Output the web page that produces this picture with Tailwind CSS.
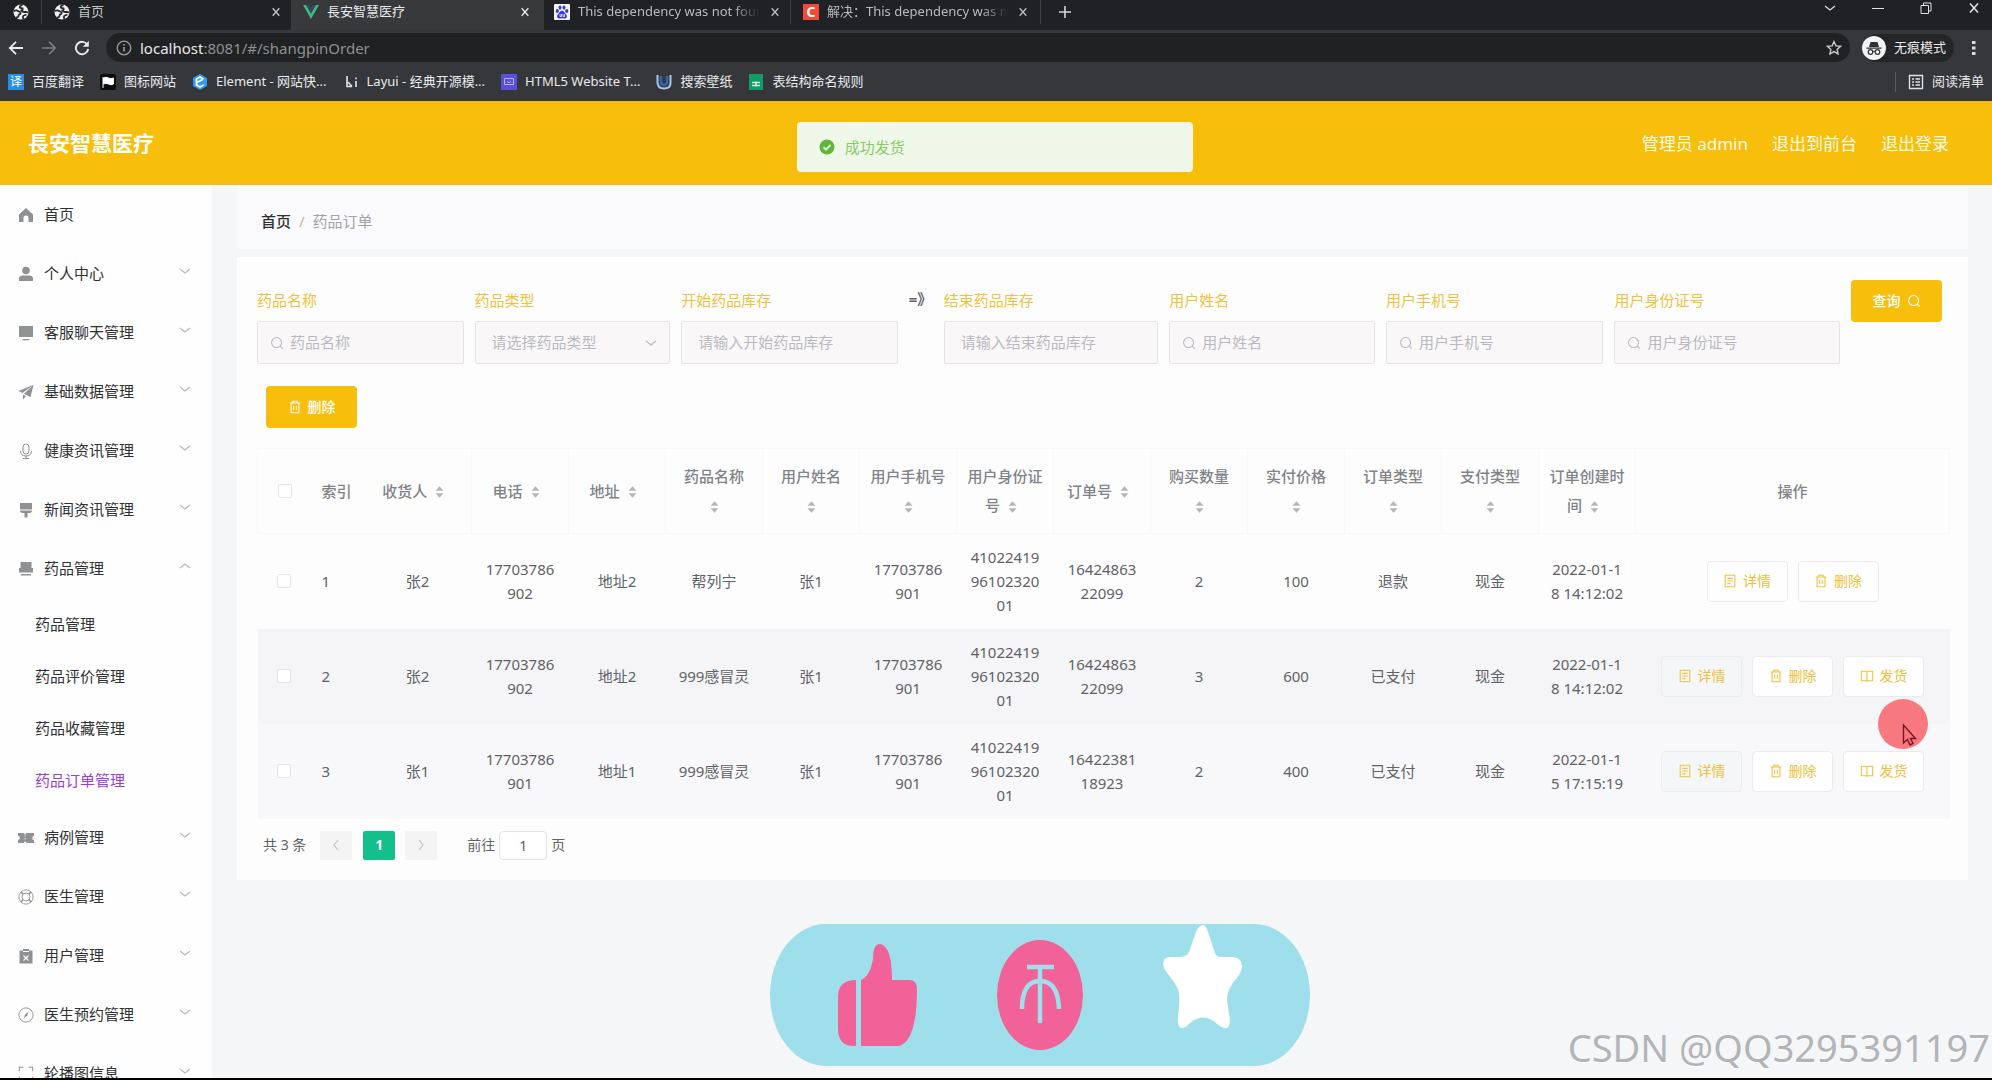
<!DOCTYPE html>
<html lang="zh-CN">
<head>
<meta charset="utf-8">
<title>長安智慧医疗</title>
<script src="https://cdn.jsdelivr.net/npm/@tailwindcss/browser@4"></script>
</head>
<body class="relative flex h-screen flex-col overflow-hidden border-b-2 border-black bg-[#f5f6f8] font-['Noto_Sans','Noto_Sans_CJK_SC',sans-serif] text-[15px] text-[#606266]">

<svg class="hidden" xmlns="http://www.w3.org/2000/svg">
  <symbol id="globe" viewBox="0 0 16 16"><circle cx="8" cy="8" r="7.500" fill="#f1f1f1"/><path d="M.8 7q3-1.500 4.700.3l2 1q.5 1.700-1.500 2.200l-1 2.500-2 .5M9.500.8Q6 1.800 7 3.800l2.500.5q.5 2-1 2.200 1.500 2 4 1.300l2.700.7M10.500 15q-1.500-2.500.5-3.500l2.500-1" fill="none" stroke="#28292b" stroke-width="1.800"/></symbol>
  <symbol id="x" viewBox="0 0 12 12"><path d="M2 1.500l8 9M10 1.500l-8 9" fill="none" stroke="currentColor" stroke-width="1.600"/></symbol>
  <symbol id="chev" viewBox="0 0 12 12"><path d="M1 4l5 4 5-4" fill="none" stroke="currentColor" stroke-width="1.200"/></symbol>
  <symbol id="search" viewBox="0 0 16 16"><circle cx="7.500" cy="7.500" r="5.700" fill="none" stroke="currentColor" stroke-width="1.200"/><path d="M11.500 11.500l3 3" stroke="currentColor" stroke-width="1.200"/></symbol>
  <symbol id="trash" viewBox="0 0 16 16"><path d="M2 3.500h12M5.500 3.500V1.500h5v2M3.500 3.500v11h9v-11M6.500 6.500v5M9.500 6.500v5" fill="none" stroke="currentColor" stroke-width="1.200"/></symbol>
  <symbol id="doc" viewBox="0 0 16 16"><path d="M2.500 1.500h11v13h-11zM5 5h6M5 8h6M5 11h3.500" fill="none" stroke="currentColor" stroke-width="1.200"/></symbol>
  <symbol id="book" viewBox="0 0 16 16"><path d="M1.500 2.500h5q1.500 0 1.500 1.500 0-1.500 1.500-1.500h5v11h-5q-1.500 0-1.500 1-0-1-1.500-1h-5zM8 4v10" fill="none" stroke="currentColor" stroke-width="1.200"/></symbol>
  <symbol id="sort" viewBox="0 0 10 16"><path d="M5 1.500l4.500 5h-9zM5 14.500l4.500-5h-9z" fill="#b4b6bb"/></symbol>
  <symbol id="home" viewBox="0 0 16 16"><path d="M8 1l7 6.500V15h-4.500v-4.500q0-2-2.500-2t-2.500 2V15H1V7.500z" fill="currentColor"/></symbol>
  <symbol id="user" viewBox="0 0 16 16"><circle cx="8" cy="4.500" r="3.800" fill="currentColor"/><path d="M1 15v-2q0-3.500 3.500-3.500h7q3.500 0 3.500 3.500v2z" fill="currentColor"/></symbol>
  <symbol id="monitor" viewBox="0 0 16 16"><path d="M1 1h14v11H1zM4.500 14h7v1.200h-7z" fill="currentColor"/></symbol>
  <symbol id="plane" viewBox="0 0 16 16"><path d="M15.500.8L.5 7l4 2zM15.500.8L6 9.800l6.500 3.400zM5 10.500v5l3-3.200z" fill="currentColor"/></symbol>
  <symbol id="mic" viewBox="0 0 16 16"><rect x="5" y="1" width="6" height="10" rx="3" fill="none" stroke="currentColor"/><path d="M2.500 8q0 5 5.500 5t5.500-5M8 13v2.500M5 15.500h6" fill="none" stroke="currentColor"/></symbol>
  <symbol id="brush" viewBox="0 0 16 16"><path d="M2 1h12v6.500H2zM2 8.500h12q0 2.500-3 2.500H9.500v4.500h-3V11H5Q2 11 2 8.500z" fill="currentColor"/></symbol>
  <symbol id="goods" viewBox="0 0 16 16"><path d="M2.500 1h11v6.500h-11zM1 7h14v4.500H1zM3 13h10v1.500H3z" fill="currentColor"/></symbol>
  <symbol id="ticket" viewBox="0 0 18 16"><path d="M0 2.500h6.500q.5 1.500 1.500 1.500t1.500-1.500H18v3q-2 .5-2 2.500t2 2.500v3H9.500Q9 12 8 12t-1.500 1.500H0v-3Q2 10 2 8T0 5.500z" fill="currentColor"/><path d="M8 5v6" stroke="#fff" stroke-dasharray="1.500 1.500"/></symbol>
  <symbol id="ring" viewBox="0 0 18 18"><circle cx="9" cy="9" r="8" fill="none" stroke="currentColor"/><circle cx="9" cy="9" r="4.500" fill="none" stroke="currentColor"/><path d="M5.800 5.800L3.300 3.300M12.200 5.800l2.500-2.500M5.800 12.200l-2.500 2.500M12.200 12.200l2.500 2.500" stroke="currentColor" stroke-width="1.500"/></symbol>
  <symbol id="claim" viewBox="0 0 16 16"><path d="M1.500 2.500H5V1h6v1.500h3.500v13h-13z" fill="currentColor"/><path d="M5 3.500h6M5.500 7.500l5 5M10.500 7.500l-5 5" stroke="#fff" stroke-width="1.100"/></symbol>
  <symbol id="compass" viewBox="0 0 18 18"><circle cx="9" cy="9" r="8" fill="none" stroke="currentColor"/><path d="M12 5L8 8.500 6.500 13l4-3.800z" fill="currentColor"/></symbol>
  <symbol id="full" viewBox="0 0 18 18"><path d="M1.500 6V1.500H6M12 1.500h4.500V6M16.500 12v4.500H12M6 16.500H1.500V12" fill="none" stroke="currentColor" stroke-width="1.200"/></symbol>
</svg>

<div class="flex-none bg-[#36373a] text-[13px] text-[#e8eaed]">
  <div class="flex h-[30px] items-start bg-[#202124]">
    <div class="flex h-6 w-[42px] items-center justify-center border-r border-[#3e3f42]"><svg class="size-4"><use href="#globe"/></svg></div>
    <div class="flex h-6 w-[249px] items-center gap-2 pr-2 pl-3 text-[#c3c5c8]"><svg class="size-4"><use href="#globe"/></svg><span class="flex-1">首页</span><button type="button" class="p-0.5" aria-label="关闭"><svg class="size-[10px]"><use href="#x"/></svg></button></div>
    <div class="flex h-[30px] w-[253px] items-center gap-2 bg-[#38393a] px-3 pb-1.5">
      <svg class="size-4 flex-none" viewBox="0 0 16 16"><path d="M0 1h3.200L8 9.500 12.800 1H16L8 15z" fill="#41b883"/><path d="M3.200 1H6l2 3.600L10 1h2.800L8 9.500z" fill="#35495e"/></svg>
      <span class="flex-1">長安智慧医疗</span><button type="button" class="p-0.5" aria-label="关闭"><svg class="size-[10px]"><use href="#x"/></svg></button></div>
    <div class="flex h-6 w-[247px] items-center gap-2 border-r border-[#3e3f42] pr-2 pl-2.5 text-[#b9bbbe]">
      <svg class="size-4 flex-none" viewBox="0 0 16 16"><rect width="16" height="16" rx="1" fill="#f4f4ff"/><g fill="#3a39d0"><ellipse cx="3.300" cy="7" rx="1.600" ry="2.100"/><ellipse cx="6" cy="3.600" rx="1.500" ry="2.100"/><ellipse cx="10" cy="3.600" rx="1.500" ry="2.100"/><ellipse cx="12.800" cy="7" rx="1.600" ry="2.100"/><path d="M8 6.800c2 0 2.500 2 4 3.500 2 2 .5 4.700-2 4.200-1.300-.3-2.700-.3-4 0-2.500.5-4-2.200-2-4.200C5.500 8.800 6 6.800 8 6.800z"/></g><path d="M6 10v2.500h1.500V10M9 10v2.500h1.500V10" stroke="#f4f4ff" stroke-width=".8" fill="none"/></svg>
      <span class="flex-1 overflow-hidden whitespace-nowrap mask-r-from-85%">This dependency was not found</span><button type="button" class="p-0.5" aria-label="关闭"><svg class="size-[10px]"><use href="#x"/></svg></button></div>
    <div class="flex h-6 w-[250px] items-center gap-2 border-r border-[#3e3f42] pr-2.5 pl-3 text-[#b9bbbe]">
      <span class="flex size-4 flex-none items-center justify-center bg-[#ef4b38] text-sm leading-4 font-bold text-white">C</span>
      <span class="flex-1 overflow-hidden whitespace-nowrap mask-r-from-85%">解决：This dependency was not found</span><button type="button" class="p-0.5" aria-label="关闭"><svg class="size-[10px]"><use href="#x"/></svg></button></div>
    <button type="button" class="flex h-6 w-12 items-center justify-center" aria-label="新标签页"><svg class="size-3" viewBox="0 0 12 12"><path d="M6 0v12M0 6h12" stroke="#d5d6d8" stroke-width="1.600"/></svg></button>
    <div class="ml-auto flex h-4 items-center gap-9 pr-3 text-[#e0e0e0]">
      <svg class="size-3"><use href="#chev"/></svg>
      <svg class="size-3" viewBox="0 0 12 12"><path d="M0 6.500h12" stroke="currentColor"/></svg>
      <svg class="size-3" viewBox="0 0 12 12"><path d="M1 3.500h7.500v8H1zM3.500 3V1h7.500v8H9" fill="none" stroke="currentColor"/></svg>
      <svg class="size-3"><use href="#x"/></svg>
    </div>
  </div>
  <div class="flex h-[35px] items-center pr-4 pl-2">
    <svg class="size-4" viewBox="0 0 16 16"><path d="M15 8H2M8 1.800L1.800 8 8 14.200" fill="none" stroke="#e8eaed" stroke-width="1.800"/></svg>
    <svg class="ml-[17px] size-4" viewBox="0 0 16 16"><path d="M1 8h13M8 1.800L14.200 8 8 14.200" fill="none" stroke="#7e8083" stroke-width="1.600"/></svg>
    <svg class="ml-[17px] size-4" viewBox="0 0 16 16"><path d="M13.500 5A6.200 6.200 0 1 0 14.200 9" fill="none" stroke="#e8eaed" stroke-width="1.900"/><path d="M14.800.8v6h-6z" fill="#e8eaed"/></svg>
    <div class="ml-4 flex h-[29px] flex-1 items-center gap-2 rounded-full bg-[#202122] pr-2 pl-2.5">
      <svg class="size-4" viewBox="0 0 16 16"><circle cx="8" cy="8" r="6.800" fill="none" stroke="#9a9c9f" stroke-width="1.300"/><path d="M8 7v4.500M8 4v1.600" stroke="#9a9c9f" stroke-width="1.600"/></svg>
      <p class="flex-1 text-[15px] leading-6 text-[#8e9093]"><span class="text-[#e8eaed]">localhost</span>:8081/#/shangpinOrder</p>
      <svg class="size-4" viewBox="0 0 16 16"><path d="M8 1.500l1.900 4.300 4.700.5-3.500 3.100 1 4.600L8 11.600 3.900 14l1-4.600L1.400 6.300l4.700-.5z" fill="none" stroke="#d0d1d3" stroke-width="1.300"/></svg>
    </div>
    <div class="ml-3 flex h-7 items-center gap-2 rounded-full bg-[#242527] pr-2">
      <svg class="size-6" viewBox="0 0 24 24"><circle cx="12" cy="12" r="12" fill="#f3f3f4"/><path d="M8.500 6h7l1.500 5H7zM4.500 11.500h15v1.200h-15z" fill="#303134"/><circle cx="8.500" cy="16" r="2.300" fill="none" stroke="#303134" stroke-width="1.200"/><circle cx="15.500" cy="16" r="2.300" fill="none" stroke="#303134" stroke-width="1.200"/><path d="M10.800 15.500q1.200-.8 2.400 0" stroke="#303134" fill="none"/></svg>
      <span>无痕模式</span>
    </div>
    <svg class="ml-[18px] h-4 w-1" viewBox="0 0 4 16"><path d="M0 1h3.500v3H0zM0 6.500h3.500v3H0zM0 12h3.500v3H0z" fill="#dcdddf"/></svg>
  </div>
  <nav class="flex h-[36px] items-center gap-4 px-2 pb-0.5 whitespace-nowrap">
    <a href="#" class="flex items-center gap-2"><span class="flex size-4 items-center justify-center bg-[#2b8ee6] text-xs leading-4 text-white">译</span>百度翻译</a>
    <a href="#" class="flex items-center gap-2"><svg class="size-4" viewBox="0 0 16 16"><rect width="16" height="16" rx="2" fill="#0c0c0d"/><path d="M3 3v11M3.500 4q2.500-1.500 5 0t5 0v6q-2.500 1.500-5 0t-5 0z" fill="#fff" stroke="#fff"/></svg>图标网站</a>
    <a href="#" class="flex items-center gap-2"><svg class="size-4" viewBox="0 0 16 16"><path d="M8 0l7 4v8l-7 4-7-4V4z" fill="#2f9df5"/><path d="M11.500 5L8 3 4.500 5v6L8 13l3.500-2M5 8.500l6-3.300" fill="none" stroke="#fff" stroke-width="1.700"/></svg>Element - 网站快...</a>
    <a href="#" class="flex items-center gap-2"><svg class="size-4" viewBox="0 0 16 16"><path d="M4 2v10.500h5M5 8l4 4.500M13 7v6M13 3.500v1.700" stroke="#e6e6e6" stroke-width="1.600" fill="none"/></svg>Layui - 经典开源模...</a>
    <a href="#" class="flex items-center gap-2"><svg class="size-4" viewBox="0 0 16 16"><rect width="16" height="16" fill="#5a50d8"/><path d="M3.500 4.500h9v6h-9z" fill="none" stroke="#b9b3ff"/><path d="M6 7.500q2 2 4 0" stroke="#b9b3ff" fill="none"/></svg>HTML5 Website T...</a>
    <a href="#" class="flex items-center gap-2"><svg class="size-4" viewBox="0 0 16 16"><path d="M1.500 1v7q0 6.500 6.500 6.500T14.500 9V1" fill="none" stroke="#a9c7ea" stroke-width="2"/><path d="M5 2v6q0 3 3 3t3-3V2" fill="none" stroke="#2b68ad" stroke-width="2.500"/></svg>搜索壁纸</a>
    <a href="#" class="flex items-center gap-2"><svg class="size-4" viewBox="0 0 16 16"><path d="M1 0h14v16H1z" fill="#119d68"/><path d="M4 8.500h8M4 11.500h8M8 7.500v5" stroke="#c9f0df" stroke-width="1.500"/></svg>表结构命名规则</a>
    <a href="#" class="ml-auto flex items-center gap-2 border-l border-[#5c5d60] pl-3"><svg class="size-4" viewBox="0 0 16 16"><path d="M1.500 1.500h13v13h-13zM4 5h2M7.500 5H12M4 8h2M7.500 8H12M4 11h2M7.500 11H12" fill="none" stroke="#e0e1e3" stroke-width="1.400"/></svg>阅读清单</a>
  </nav>
</div>

<header class="flex h-[84px] flex-none items-center justify-between bg-[#f7be0b] pt-0.5 pr-[43px] pl-7 text-white">
  <h1 class="text-[21px] font-bold">長安智慧医疗</h1>
  <div class="flex gap-6 text-[17px] text-[#fffbe8]"><span>管理员 admin</span><a href="#">退出到前台</a><a href="#">退出登录</a></div>
</header>

<div class="flex min-h-0 flex-1">
  <aside class="w-[212px] flex-none overflow-hidden bg-[#fefefe] text-[#303133]">
    <ul id="menu"></ul>
  </aside>

  <main class="min-w-0 flex-1 pr-6 pl-[25px]">
    <nav class="mb-2 flex h-16 items-center gap-2 bg-[#faf9fb] px-6 pt-2" aria-label="面包屑"><a href="#" class="font-medium text-[#303133]">首页</a><span class="text-[#b4b8c0]">/</span><span class="text-[#a0a3ab]">药品订单</span></nav>
    <section class="bg-[#fefdfe] p-5 pt-[23px] pr-[18px]">
      <form class="grid grid-cols-[207fr_196fr_217fr_24px_215fr_206fr_218fr_226fr_91px] gap-x-[11px] pr-2">
        <div><label for="f1" class="block h-[41px] text-[#eec23c] leading-[41px]">药品名称</label><div class="flex h-[43px] items-center gap-1.5 rounded-xs border border-[#e6e3e8] bg-[#faf7f9] px-3 text-[#b9bac0]"><svg class="size-[14px] flex-none"><use href="#search"/></svg><input id="f1" placeholder="药品名称" class="w-full min-w-0 placeholder:text-[#b9bac0]"></div></div>
        <div><label for="f2" class="block h-[41px] text-[#eec23c] leading-[41px]">药品类型</label><div class="flex h-[43px] items-center rounded-xs border border-[#e6e3e8] bg-[#faf7f9] pr-3 pl-4 text-[#b9bac0]"><select id="f2" class="min-w-0 flex-1 appearance-none"><option>请选择药品类型</option></select><svg class="size-3 flex-none"><use href="#chev"/></svg></div></div>
        <div><label for="f3" class="block h-[41px] text-[#eec23c] leading-[41px]">开始药品库存</label><div class="flex h-[43px] items-center rounded-xs border border-[#e6e3e8] bg-[#faf7f9] px-4"><input id="f3" placeholder="请输入开始药品库存" class="w-full min-w-0 placeholder:text-[#b9bac0]"></div></div>
        <span class="leading-[38px] font-bold whitespace-nowrap text-[#606266]">=》</span>
        <div><label for="f4" class="block h-[41px] text-[#eec23c] leading-[41px]">结束药品库存</label><div class="flex h-[43px] items-center rounded-xs border border-[#e6e3e8] bg-[#faf7f9] px-4"><input id="f4" placeholder="请输入结束药品库存" class="w-full min-w-0 placeholder:text-[#b9bac0]"></div></div>
        <div><label for="f5" class="block h-[41px] text-[#eec23c] leading-[41px]">用户姓名</label><div class="flex h-[43px] items-center gap-1.5 rounded-xs border border-[#e6e3e8] bg-[#faf7f9] px-3 text-[#b9bac0]"><svg class="size-[14px] flex-none"><use href="#search"/></svg><input id="f5" placeholder="用户姓名" class="w-full min-w-0 placeholder:text-[#b9bac0]"></div></div>
        <div><label for="f6" class="block h-[41px] text-[#eec23c] leading-[41px]">用户手机号</label><div class="flex h-[43px] items-center gap-1.5 rounded-xs border border-[#e6e3e8] bg-[#faf7f9] px-3 text-[#b9bac0]"><svg class="size-[14px] flex-none"><use href="#search"/></svg><input id="f6" placeholder="用户手机号" class="w-full min-w-0 placeholder:text-[#b9bac0]"></div></div>
        <div><label for="f7" class="block h-[41px] text-[#eec23c] leading-[41px]">用户身份证号</label><div class="flex h-[43px] items-center gap-1.5 rounded-xs border border-[#e6e3e8] bg-[#faf7f9] px-3 text-[#b9bac0]"><svg class="size-[14px] flex-none"><use href="#search"/></svg><input id="f7" placeholder="用户身份证号" class="w-full min-w-0 placeholder:text-[#b9bac0]"></div></div>
        <button type="button" class="flex h-[42px] items-center justify-center gap-1.5 rounded-sm bg-[#f7be0b] text-sm font-medium text-white">查询<svg class="size-[14px]"><use href="#search"/></svg></button>
      </form>
      <button type="button" class="mt-[22px] ml-[9px] flex h-[42px] w-[91px] items-center justify-center gap-1.5 rounded-sm bg-[#f7be0b] text-sm font-medium text-white"><svg class="size-[14px]"><use href="#trash"/></svg>删除</button>

      <table class="mt-5 w-full table-fixed text-center">
        <colgroup><col class="w-[51px]"><col class="w-[55px]"><col class="w-[108px]"><col class="w-[97px]"><col class="w-[97px]"><col class="w-[97px]"><col class="w-[97px]"><col class="w-[97px]"><col class="w-[97px]"><col class="w-[97px]"><col class="w-[97px]"><col class="w-[97px]"><col class="w-[97px]"><col class="w-[97px]"><col class="w-[97px]"><col></colgroup>
        <thead><tr id="head" class="h-[85px] border border-[#f8f8fa] leading-[29px] text-[#808389]"></tr></thead>
        <tbody id="rows"></tbody>
      </table>

      <div class="mt-3 flex h-[29px] items-center pl-1.5 text-sm">
        <span>共 3 条</span>
        <button type="button" class="ml-[14px] flex h-[29px] w-8 items-center justify-center bg-[#f4f4f5] text-[#c0c4cc]" aria-label="上一页"><svg class="size-3 rotate-90"><use href="#chev"/></svg></button>
        <button type="button" class="ml-[11px] h-[29px] w-8 rounded-xs bg-[#13c08b] font-bold text-white">1</button>
        <button type="button" class="ml-2.5 flex h-[29px] w-8 items-center justify-center bg-[#f4f4f5] text-[#c0c4cc]" aria-label="下一页"><svg class="size-3 -rotate-90"><use href="#chev"/></svg></button>
        <label for="pg" class="ml-[30px]">前往</label><input id="pg" value="1" class="mx-1 h-[29px] w-12 rounded-sm border border-[#e2e4e8] bg-white text-center"><span>页</span>
      </div>
    </section>
  </main>
</div>

<div role="status" class="absolute top-[122px] left-[40%] flex h-[50px] w-[396px] items-center gap-2.5 rounded-sm bg-[#eff7e9] px-[22px] text-[#86cb67]">
  <svg class="size-4" viewBox="0 0 16 16"><circle cx="8" cy="8" r="7.500" fill="#5fb63a"/><path d="M4.500 8.200l2.500 2.500 4.500-4.800" fill="none" stroke="#e6f7de" stroke-width="1.800"/></svg>成功发货
</div>

<svg class="absolute top-[699px] right-[64px] size-[50px]" viewBox="0 0 50 50"><circle cx="25" cy="25" r="25" fill="#f8787f"/><path d="M25.500 26v18l4-3.500 2.500 5.500 3-1.500-2.500-5h5z" fill="#f8787f" stroke="#7a1622" stroke-width="1.400"/></svg>

<div class="absolute bottom-3 left-[770px] h-[142px] w-[540px] rounded-[56px/71px] bg-[#9fdfec]">
  <svg class="size-full" viewBox="0 0 540 142">
    <path d="M86 56v66q-18 1-18-17V73q0-17 18-17zM91 56q9-4 12-21 0-15 7-15 12 2 12 36h18q7 0 7 10 0 35-9 49-5 7-10 7H91z" fill="#f16398"/>
    <ellipse cx="270" cy="71" rx="43" ry="55" fill="#f16398"/>
    <path d="M257 43h27M270 43v56M252 85q0-28 18-28t19 28" fill="none" stroke="#9fdfec" stroke-width="4.500"/>
    <path d="M433 1q3 0 5 7l7 21q1 4 6 4h12q9 1 9 9 0 6-6 13-6 7-8 14-2 6 0 14l2 12q0 11-6 9-4-1-8-5-13-11-26 0-4 5-8 5-5-1-4-10l1-11q1-12-1-18-4-8-10-15-5-6-5-10 0-7 8-7h10q6-1 8-5l7-20q3-7 7-7z" fill="#fff"/>
  </svg>
</div>

<p class="absolute right-0.5 bottom-1.5 font-['Noto_Sans',sans-serif] text-[38px] leading-[50px] whitespace-nowrap text-[#b2b4b8] text-shadow-2xs text-shadow-white">CSDN @QQ3295391197</p>

<script>
const menu = [["home","首页"],["user","个人中心",1],["monitor","客服聊天管理",1],["plane","基础数据管理",1],["mic","健康资讯管理",1],["brush","新闻资讯管理",1],["goods","药品管理",2],["ticket","病例管理",1],["ring","医生管理",1],["claim","用户管理",1],["compass","医生预约管理",1],["full","轮播图信息",1]];
const subs = ["药品管理","药品评价管理","药品收藏管理","药品订单管理"];
document.getElementById("menu").innerHTML = menu.map(([icon, text, kind]) => `<li><a href="#" class="flex h-[59px] items-center gap-2.5 pr-[21px] pl-[18px]"><svg class="size-4 flex-none text-[#8f9195]"><use href="#${icon}"/></svg><span class="flex-1">${text}</span>${kind ? `<svg class="mb-1.5 size-3 text-[#b5b7bc] ${kind === 2 ? "rotate-180" : ""}"><use href="#chev"/></svg>` : ""}</a>${kind === 2 ? `<ul class="pb-0.5">${subs.map((s, i) => `<li><a href="#" class="flex h-[52px] items-center pl-[35px] ${i === 3 ? "text-[#9440dc]" : ""}">${s}</a></li>`).join("")}</ul>` : ""}</li>`).join("");

const sort = '<svg class="mx-2 inline-block h-[14px] w-[9px] align-middle"><use href="#sort"/></svg>';
const check = n => `<input type="checkbox" aria-label="${n}" class="block size-[14px] appearance-none rounded-xs border border-[#e4e6eb] bg-white">`;
const cols = ["收货人","电话","地址","药品名称","用户姓名","用户手机号","用户身份证号","订单号","购买数量","实付价格","订单类型","支付类型","订单创建时间"];
document.getElementById("head").innerHTML = `<th class="pl-5">${check("全选")}</th><th class="pl-[13px] text-left font-medium">索引</th>` + cols.map(c => `<th class="border-r border-[#f8f8fa] px-[9px] font-medium">${c}${sort}</th>`).join("") + '<th class="font-medium">操作</th>';

const data = [
  ["张2","17703786902","地址2","帮列宁","张1","17703786901","410224199610232001","1642486322099","2","100","退款","现金","2022-01-18 14:12:02"],
  ["张2","17703786902","地址2","999感冒灵","张1","17703786901","410224199610232001","1642486322099","3","600","已支付","现金","2022-01-18 14:12:02"],
  ["张1","17703786901","地址1","999感冒灵","张1","17703786901","410224199610232001","1642238118923","2","400","已支付","现金","2022-01-15 17:15:19"]
];
const btn = (icon, text, shade) => `<button type="button" class="flex h-[41px] w-[81px] items-center justify-center gap-1.5 rounded-sm border border-[#ebebef] text-sm text-[#efc03a] ${shade ? "bg-[#f4f6f8]" : "bg-[#fefefe]"}"><svg class="size-[14px]"><use href="#${icon}"/></svg>${text}</button>`;
const bg = ["", "bg-[#f5f5f8]", "bg-[#f8f8fa]"];
document.getElementById("rows").innerHTML = data.map((r, i) => `<tr class="h-[95px] leading-6 ${bg[i]}"><td class="pl-[19px]">${check("选择第" + (i + 1) + "行")}</td><td class="pl-[13px] text-left">${i + 1}</td>${r.map(c => `<td class="px-3 break-all">${c}</td>`).join("")}<td><div class="flex justify-center gap-2.5">${btn("doc","详情",i > 0)}${btn("trash","删除")}${i ? btn("book","发货") : ""}</div></td></tr>`).join("");
</script>
</body>
</html>
